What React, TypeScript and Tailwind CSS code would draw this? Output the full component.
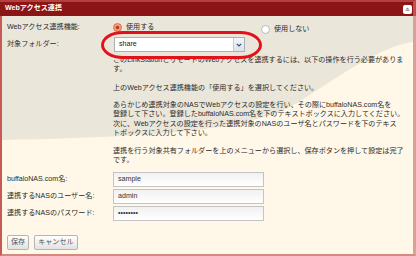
import React from 'react';

const Radio = ({ checked }: { checked?: boolean }) => (
  <svg width="9" height="9" viewBox="0 0 9 9" className="shrink-0">
    {checked ? (
      <>
        <circle cx="4.5" cy="4.5" r="4" fill="#f4a07c" stroke="#d2623c" strokeWidth="0.8" />
        <circle cx="4.5" cy="4.5" r="1.8" fill="#c0391f" />
      </>
    ) : (
      <circle cx="4.5" cy="4.5" r="4" fill="#ffffff" stroke="#a8a8a8" strokeWidth="0.8" />
    )}
  </svg>
);

const Field = ({ value }: { value: string }) => (
  <div className="w-[151px] h-[15px] flex items-center px-[4px] border border-[#c4c4c4] bg-gradient-to-b from-[#f1f1f1] to-white text-[#333]">
    {value}
  </div>
);

export default function App() {
  return (
    <div className="relative w-[416px] h-[256px] flex flex-col bg-[#fff8e8] text-[7.1px] leading-[9.3px] text-[#2a2a2a] font-['Liberation_Sans','Noto_Sans_CJK_JP',sans-serif]">
      {/* title bar */}
      <div className="h-[16px] shrink-0 flex items-center justify-between bg-[#8b1416] border-t-2 border-[#b5403e] border-r-[3px] border-r-[#c4524c] pl-[5px] pr-[1px]">
        <span className="text-white font-bold">Webアクセス連携</span>
        <span className="w-[9px] h-[9px] rounded-[2px] bg-white flex items-center justify-center">
          <svg width="5" height="4" viewBox="0 0 5 4">
            <path d="M0.5 2.6 L2.5 0.6 L4.5 2.6 Z" fill="#8a8a8a" />
            <rect x="0.5" y="3.1" width="4" height="0.8" fill="#8a8a8a" />
          </svg>
        </span>
      </div>

      {/* body */}
      <div className="relative flex-1 overflow-hidden border-l-2 border-l-[#c65a55] border-r-[3px] border-r-[#dba096] border-b-2 border-b-[#d58a80] pl-[5px] pt-[4px]">
        <svg className="absolute inset-0 w-full h-full" viewBox="0 0 411 238" preserveAspectRatio="none">
          <path d="M0 0 H411 V26 C380 30 345 55 300 84 C262 108 205 120 0 124 Z" fill="#ebe6da" />
        </svg>

        <div className="relative flex flex-col">
          <div className="flex items-center h-[16px]">
            <div className="w-[106px]">Webアクセス連携機能:</div>
            <div className="flex items-center gap-[4px] w-[148px]">
              <Radio checked />
              <span>使用する</span>
            </div>
            <div className="flex items-center gap-[4px] mt-[3px]">
              <Radio />
              <span>使用しない</span>
            </div>
          </div>

          <div className="flex items-center h-[15px] mt-[1px]">
            <div className="w-[107px]">対象フォルダー:</div>
            <div className="w-[131px] h-[15px] flex border border-[#a9b0b8] bg-white">
              <span className="flex-1 flex items-center pl-[4px] text-[#222]">share</span>
              <span className="w-[11px] flex items-center justify-center border-l border-[#c6ccd2] bg-gradient-to-b from-[#f4f6f8] to-[#dde3ea]">
                <svg width="6" height="4" viewBox="0 0 6 4">
                  <path d="M0.8 0.8 L3 3 L5.2 0.8" fill="none" stroke="#2c4a86" strokeWidth="1.2" />
                </svg>
              </span>
            </div>
          </div>

          <div className="pl-[106px] mt-[4px] whitespace-nowrap">
            <p>このLinkStationとリモートのWebアクセスを連携するには、以下の操作を行う必要がありま<br />す。</p>
            <p className="mt-[9.3px]">上のWebアクセス連携機能の「使用する」を選択してください。</p>
            <p className="mt-[8px]">
              あらかじめ連携対象のNASでWebアクセスの設定を行い、その際にbuffaloNAS.com名を<br />
              登録して下さい。登録したbuffaloNAS.com名を下のテキストボックスに入力してください。<br />
              次に、Webアクセスの設定を行った連携対象のNASのユーザ名とパスワードを下のテキス<br />
              トボックスに入力して下さい。
            </p>
            <p className="mt-[8.5px]">連携を行う対象共有フォルダーを上のメニューから選択し、保存ボタンを押して設定は完了<br />です。</p>
          </div>

          <div className="flex flex-col gap-[2px] mt-[7px]">
            <div className="flex items-center">
              <div className="w-[106px]">buffaloNAS.com名:</div>
              <Field value="sample" />
            </div>
            <div className="flex items-center">
              <div className="w-[106px]">連携するNASのユーザー名:</div>
              <Field value="admin" />
            </div>
            <div className="flex items-center">
              <div className="w-[106px]">連携するNASのパスワード:</div>
              <Field value="••••••••" />
            </div>
          </div>

          <div className="flex gap-[5px] mt-[14px]">
            <button className="h-[15px] px-[3px] border border-[#b4b4b4] rounded-[2px] bg-gradient-to-b from-white to-[#e2e2e2] text-[#555]">保存</button>
            <button className="h-[15px] px-[3px] border border-[#b4b4b4] rounded-[2px] bg-gradient-to-b from-white to-[#e2e2e2] text-[#555]">キャンセル</button>
          </div>
        </div>
      </div>

      {/* highlight around the folder menu */}
      <div className="absolute left-[101px] top-[31px] w-[161px] h-[28px] border-[3px] border-[#e2111b] rounded-[22px/14px]" />
    </div>
  );
}
